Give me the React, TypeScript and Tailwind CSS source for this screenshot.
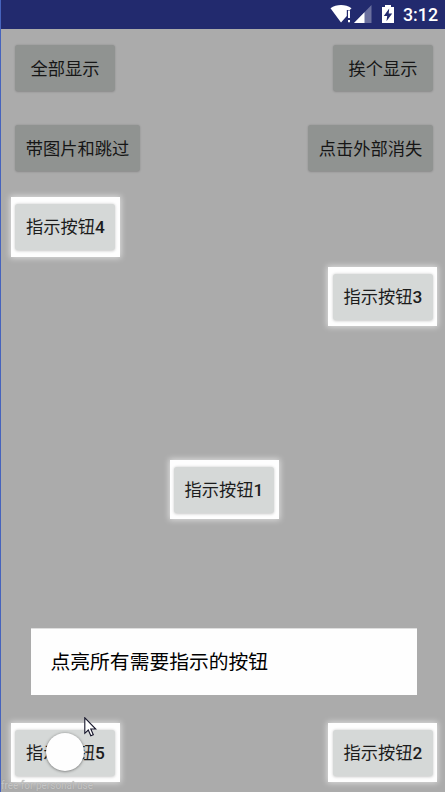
import type { ReactNode } from "react";

function Button({ children, wide, dim }: { children: ReactNode; wide?: boolean; dim?: boolean }) {
  return (
    <div
      className={`flex h-[46px] items-center justify-center rounded-[3px] text-[17.25px] leading-none font-normal whitespace-nowrap ${
        wide ? "w-[125px]" : "w-[100px]"
      } ${
        dim
          ? "bg-[#909391] pt-[3px] text-[#161616] shadow-[0_0.5px_2px_rgba(0,0,0,0.2)]"
          : "bg-[#d5d8d7] pt-px text-[#1c1c1c] shadow-[0_0.5px_3px_rgba(0,0,0,0.22)]"
      }`}
    >
      {children}
    </div>
  );
}

function Highlight({
  label,
  digit,
  tall,
  right,
}: {
  label: string;
  digit: string;
  tall?: boolean;
  right?: boolean;
}) {
  return (
    <div
      className={`flex w-[109px] bg-[#fefefe] shadow-[0_0_6px_1px_rgba(255,255,255,0.6)] ${
        right ? "pl-[5px]" : "pl-1"
      } ${tall ? "h-[60px] pt-[7px]" : "h-[59px] pt-[7px]"}`}
    >
      <Button>
        <span className={right ? "" : "pl-px"}>{label}</span>
        <span className="font-medium">{digit}</span>
      </Button>
    </div>
  );
}

function StatusBar() {
  return (
    <header className="flex h-[29px] shrink-0 items-center justify-end bg-[#222a6e] pr-[7px] text-white">
      <svg width="66" height="29" viewBox="0 0 66 29" className="mr-[7px]">
        <path d="M0.5 8.2C6.5 3.8 15.5 3.8 21.5 8.2L19.8 10H16.8V16L11 22.5Z" fill="#fff" />
        <path d="M18 10.5h2v7.5h-2zM18 20h2v2.3h-2z" fill="#fff" />
        <path d="M41.5 5v18H24Z" fill="#6b709e" />
        <path d="M34.5 12.2V23H24Z" fill="#fff" />
        <path d="M55 5h6v2h3v16H52V7h3z" fill="#fff" />
        <path d="M59.2 8.5 53.8 16h3.4l-.7 5.2 5.7-7.8h-3.5z" fill="#222a6e" />
      </svg>
      <span className="font-[Roboto] text-[17.8px] leading-none font-medium">3:12</span>
    </header>
  );
}

export default function App() {
  return (
    <div className="relative flex h-[792px] w-[445px] flex-col overflow-hidden border-l border-[#4663bd] bg-[#ababab] font-[Roboto,'Noto_Sans_CJK_SC',sans-serif]">
      <StatusBar />
      <main className="flex flex-1 flex-col">
        <div className="flex justify-between pt-4 pr-3 pl-[14px]">
          <Button dim>全部显示</Button>
          <Button dim>挨个显示</Button>
        </div>
        <div className="flex justify-between pt-[34px] pr-3 pl-[14px]">
          <Button dim wide>带图片和跳过</Button>
          <Button dim wide>点击外部消失</Button>
        </div>
        <div className="mt-[26px] ml-[10px] self-start">
          <Highlight label="指示按钮" digit="4" tall />
        </div>
        <div className="mt-[10px] mr-2 self-end">
          <Highlight label="指示按钮" digit="3" right />
        </div>
        <div className="mt-[134px] ml-[168.5px] self-start">
          <Highlight label="指示按钮" digit="1" />
        </div>
        <div className="mt-[109px] mr-7 ml-[30px] flex h-[67px] items-center border-t border-[#dedede] bg-[#fefefe] pt-0.5 pl-[19.5px] text-[19.8px] leading-none text-black">
          点亮所有需要指示的按钮
        </div>
        <div className="mt-7 mr-2 ml-[10px] flex justify-between">
          <Highlight label="指示按钮" digit="5" />
          <Highlight label="指示按钮" digit="2" right />
        </div>
      </main>
      <div className="absolute top-[733px] left-[45px] size-[38px] rounded-full bg-[#fefefe] shadow-[0_0.5px_3px_rgba(0,0,0,0.5)]" />
      <svg className="absolute top-[717px] left-[83px]" width="13" height="20" viewBox="0 0 13 20">
        <path d="M.8 .8V16.3L4.3 13L6.8 18.8L9.3 17.7L6.8 12H11.8Z" fill="#fff" stroke="#15152a" strokeWidth="1.1" />
      </svg>
      <div className="absolute top-[781px] left-0 text-[10px] leading-[10px] whitespace-nowrap text-[#c6c6c6] [text-shadow:0_0_1px_#999]">
        free for personal use
      </div>
    </div>
  );
}
